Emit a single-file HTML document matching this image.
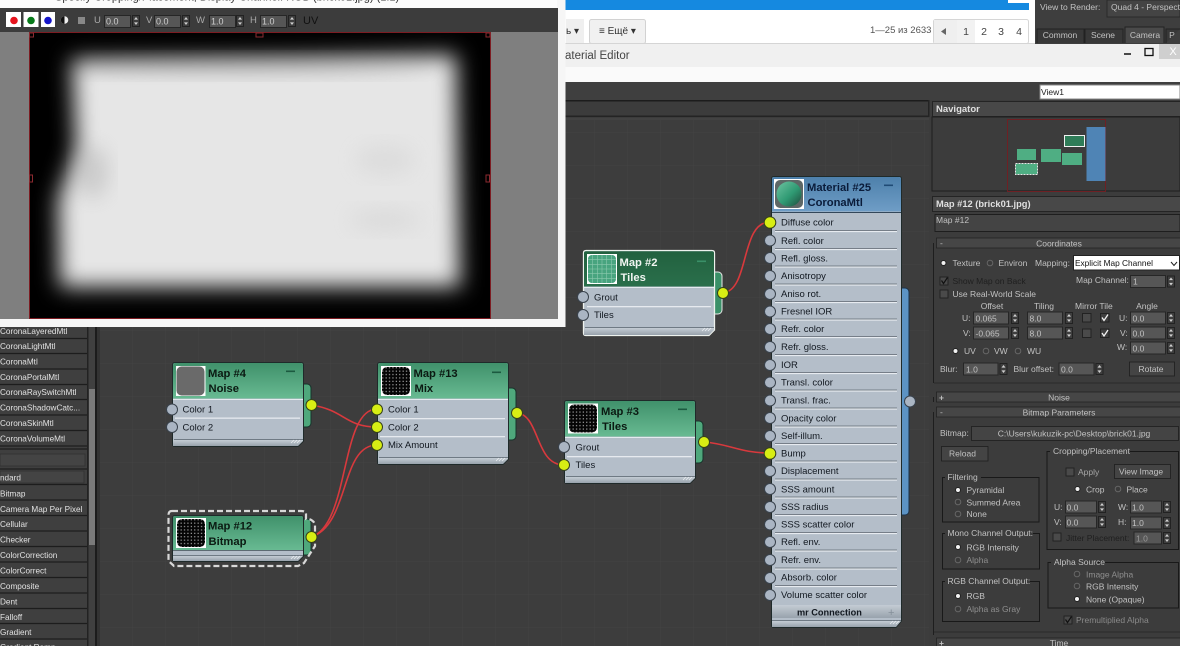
<!DOCTYPE html>
<html><head><meta charset="utf-8"><style>
html,body{margin:0;padding:0;background:#3c3c3c;width:1180px;height:646px;overflow:hidden}
svg{display:block;font-family:"Liberation Sans","Noto Sans CJK SC",sans-serif;filter:blur(.35px)}
text{white-space:pre}
.l{font-size:8.5px;fill:#c2c2c2}
.m{text-anchor:middle}
.dim{fill:#1f1f1f}
.li{font-size:8.2px;fill:#e2e2e2}
.p{font-size:9.5px;fill:#121820}
.t{font-size:11.2px;font-weight:bold;fill:#0b1a12}
.f{fill:#565656;stroke:#262626;stroke-width:1}
.b{fill:#444;stroke:#1f1f1f;stroke-width:.8}
.bar{fill:#464646;stroke:#222;stroke-width:.8}
.grp{fill:none;stroke:#191919;stroke-width:1}
.lb{fill:#3c3c3c;stroke:none}
.w{fill:none;stroke:#d8393d;stroke-width:1.6}
.s{fill:#d8ee14;stroke:#35401a;stroke-width:1}
.o{fill:#aab5c3;stroke:#39424c;stroke-width:1}
.sw{fill:#b4bec9;stroke:#1f2a2a;stroke-width:1}
.h{stroke:#eef1f4;stroke-width:.7;fill:none}
</style></head><body>
<svg width="1180" height="646" viewBox="0 0 1180 646" xmlns="http://www.w3.org/2000/svg">
<defs>
<linearGradient id="gr" x1="0" y1="0" x2="0" y2="1"><stop offset="0" stop-color="#40916b"/><stop offset="1" stop-color="#68ba92"/></linearGradient>
<linearGradient id="dg" x1="0" y1="0" x2="0" y2="1"><stop offset="0" stop-color="#22613f"/><stop offset="1" stop-color="#2a6f4b"/></linearGradient>
<linearGradient id="bl" x1="0" y1="0" x2="0" y2="1"><stop offset="0" stop-color="#4d80ab"/><stop offset="1" stop-color="#6f9dc6"/></linearGradient>
<linearGradient id="bt" x1="0" y1="0" x2="0" y2="1"><stop offset="0" stop-color="#c4ccd4"/><stop offset="1" stop-color="#98a2ac"/></linearGradient>
<linearGradient id="sp" x1="0" y1="0" x2="1" y2="1"><stop offset="0" stop-color="#6fc4a2"/><stop offset=".55" stop-color="#2f9a73"/><stop offset="1" stop-color="#1f4a3c"/></linearGradient>
<filter id="bb" x="-20%" y="-20%" width="140%" height="140%"><feGaussianBlur stdDeviation="11"/></filter>
<filter id="b2" x="-30%" y="-30%" width="160%" height="160%"><feGaussianBlur stdDeviation="10"/></filter>
<pattern id="grid" width="33" height="33" patternUnits="userSpaceOnUse"><path d="M33 0H0V33" fill="none" stroke="#444" stroke-width="1"/></pattern>
<pattern id="dots" width="3.4" height="3.4" patternUnits="userSpaceOnUse"><rect width="3.4" height="3.4" fill="#050505"/><rect x="1.2" y="1.2" width="1.1" height="1.1" fill="#c5c5c5"/></pattern>
<symbol id="spin" width="8" height="12" viewBox="0 0 8 12"><rect x=".5" y=".5" width="7" height="11" fill="#3e3e3e" stroke="#222"/><path d="M4 2L6 4.6H2ZM4 10L6 7.4H2Z" fill="#cfcfcf"/></symbol>
<symbol id="th" width="30" height="30" viewBox="0 0 30 30"><rect width="30" height="30" fill="#fff"/><rect x="1" y="1" width="28" height="28" rx="5" fill="url(#dots)"/></symbol>
</defs>

<!-- base -->
<rect width="1180" height="646" fill="#3c3c3c"/>
<rect x="100" y="120" width="829" height="526" fill="#3d3d3d"/>
<rect x="100" y="120" width="829" height="526" fill="url(#grid)"/>

<!-- top browser strip -->
<rect x="565" y="0" width="470" height="44" fill="#fff"/>
<rect x="565" y="0" width="464" height="10" fill="#1589e0"/>
<rect x="1008" y="0" width="21" height="3" fill="#fff"/>
<rect x="566" y="19" width="18" height="24" fill="#efefef"/>
<text x="566" y="34" font-size="10" fill="#333">ь ▾</text>
<rect x="589.500" y="19.500" width="56" height="24" rx="2" fill="#f1f1f1" stroke="#d2d2d2"/>
<text x="599" y="34" font-size="10" fill="#333">≡ Ещё ▾</text>
<text x="870" y="33" font-size="9.500" fill="#555">1—25 из 2633</text>
<rect x="933.500" y="19.500" width="95" height="24" rx="2" fill="#fff" stroke="#d6d6d6"/>
<rect x="934" y="20" width="23" height="23" fill="#efefef"/>
<path d="M941 31.500L946 28V35Z" fill="#666"/>
<rect x="957" y="20" width="18" height="23" fill="#f2f2f2"/>
<text x="966" y="35" font-size="10.500" fill="#444" text-anchor="middle">1</text>
<text x="984" y="35" font-size="10.500" fill="#444" text-anchor="middle">2</text>
<text x="1001" y="35" font-size="10.500" fill="#444" text-anchor="middle">3</text>
<text x="1019" y="35" font-size="10.500" fill="#444" text-anchor="middle">4</text>

<!-- render setup corner -->
<rect x="1035" y="0" width="145" height="44" fill="#3e3e3e"/>
<text x="1040" y="10" class="l">View to Render:</text>
<rect x="1107" y="0" width="73" height="17" fill="#444" stroke="#2a2a2a"/>
<text x="1111" y="10" class="l">Quad 4 - Perspective</text>
<path d="M1037 43V29H1084V43M1085 43V29H1123V43" fill="#383838" stroke="#222"/>
<path d="M1125 43V27H1164V43" fill="#4a4a4a" stroke="#222"/>
<path d="M1166 43V29H1180" fill="#383838" stroke="#222"/>
<text x="1060" y="38" class="l m">Common</text>
<text x="1103" y="38" class="l m">Scene</text>
<text x="1145" y="38" class="l m">Camera</text>
<text x="1172" y="38" class="l m">P</text>

<!-- material editor title -->
<rect x="565" y="44" width="615" height="23" fill="#f0f0f0"/>
<rect x="565" y="67" width="615" height="15" fill="#fafafa"/>
<rect x="565" y="43" width="470" height="1" fill="#d5d5d5"/>
<text x="565" y="59" font-size="11.500" fill="#444">aterial Editor</text>
<path d="M1124 54H1131" stroke="#111" stroke-width="1.500"/>
<rect x="1145" y="48.500" width="8" height="7" fill="none" stroke="#111" stroke-width="1.300"/>
<rect x="1159" y="44" width="21" height="15" fill="#cfcfcf"/>
<text x="1173" y="55" font-size="11" fill="#fff" text-anchor="middle">X</text>

<!-- toolbar strip -->
<rect x="565" y="82" width="615" height="18" fill="#3f3f3f"/>
<rect x="1040" y="85" width="140" height="14" fill="#fff" stroke="#888"/>
<text x="1041" y="95" font-size="8.500" fill="#222">View1</text>
<rect x="565" y="100" width="364" height="1.500" fill="#1c1c1c"/>
<rect x="565" y="115.500" width="364" height="1.500" fill="#242424"/>
<rect x="928" y="100" width="1.500" height="17" fill="#242424"/>
<rect x="100" y="118.500" width="829" height="1" fill="#555" opacity=".5"/>

<!-- left list -->
<rect x="0" y="327" width="100" height="319" fill="#333"/>
<rect x="0" y="327" width="87" height="319" fill="#3f3f3f"/>
<rect x="88" y="327" width="7" height="319" fill="#404040"/>
<rect x="89" y="389" width="6" height="156" fill="#7a7a7a"/>
<rect x="95" y="327" width="2" height="319" fill="#1c1c1c"/>
<rect x="87" y="327" width="1.500" height="319" fill="#222"/>
<g stroke="#1d1d1d" stroke-width="1.200">
<path d="M0 338.500H87M0 353.500H87M0 369H87M0 384.500H87M0 399.500H87M0 415H87M0 430.500H87M0 446H87M0 449H87M0 469H87M0 484.500H87M0 500H87M0 515.500H87M0 531H87M0 546.500H87M0 562H87M0 577.500H87M0 593H87M0 608.500H87M0 623.500H87M0 639H87"/>
</g>
<rect x="0" y="454" width="85" height="12" fill="#444" stroke="#333"/>
<rect x="0" y="471" width="84" height="12" fill="#444" stroke="#333"/>
<text x="0" y="334" class="li">CoronaLayeredMtl</text>
<text x="0" y="349" class="li">CoronaLightMtl</text>
<text x="0" y="364.500" class="li">CoronaMtl</text>
<text x="0" y="380" class="li">CoronaPortalMtl</text>
<text x="0" y="395" class="li">CoronaRaySwitchMtl</text>
<text x="0" y="410.500" class="li">CoronaShadowCatc...</text>
<text x="0" y="426" class="li">CoronaSkinMtl</text>
<text x="0" y="441.500" class="li">CoronaVolumeMtl</text>
<text x="0" y="480.500" class="li">ndard</text>
<text x="0" y="496.500" class="li">Bitmap</text>
<text x="0" y="512" class="li">Camera Map Per Pixel</text>
<text x="0" y="527" class="li">Cellular</text>
<text x="0" y="542.500" class="li">Checker</text>
<text x="0" y="558" class="li">ColorCorrection</text>
<text x="0" y="573.500" class="li">ColorCorrect</text>
<text x="0" y="589" class="li">Composite</text>
<text x="0" y="604.500" class="li">Dent</text>
<text x="0" y="620" class="li">Falloff</text>
<text x="0" y="635" class="li">Gradient</text>
<text x="0" y="650" class="li">Gradient Ramp</text>

<!-- Node: Map #4 -->
<rect x="296" y="384" width="15" height="43" rx="4" fill="#4fa87c" stroke="#16332a"/>
<path d="M175 362.500H301Q303.500 362.500 303.500 365V441L298 446.500H175Q172.500 446.500 172.500 444V365Q172.500 362.500 175 362.500Z" class="sw"/>
<path d="M175 363H301Q303 363 303 365V398.500H173V365Q173 363 175 363Z" fill="url(#gr)"/>
<rect x="173" y="399" width="130" height="1" fill="#e5eaef"/>
<rect x="175" y="417.500" width="125" height="1.300" fill="#e6eaef"/>
<rect x="174" y="439" width="129" height="1" fill="#6f7a84"/>
<path d="M173 440H303V441L298 446H173Z" fill="url(#bt)"/>
<path class="h" d="M291 443L294 440M294 443L297 440M297 443L300 440"/>
<rect x="176" y="366" width="29.500" height="30" fill="#fff"/><rect x="176.500" y="366.500" width="28" height="29" rx="5" fill="#6a6a6a"/>
<text x="208" y="377" class="t">Map #4</text>
<text x="208.500" y="392" class="t">Noise</text>
<rect x="286" y="370.500" width="9" height="1.600" fill="#1c5a40"/>
<text x="182.500" y="412.500" class="p">Color 1</text>
<text x="182.500" y="430.500" class="p">Color 2</text>

<!-- Node: Map #12 -->
<rect x="296" y="519" width="15" height="36" rx="4" fill="#4fa87c" stroke="#16332a"/>
<path d="M175 515.500H301Q303.500 515.500 303.500 518V556L298 561.500H175Q172.500 561.500 172.500 559V518Q172.500 515.500 175 515.500Z" class="sw"/>
<path d="M175 516H301Q303 516 303 518V550H173V518Q173 516 175 516Z" fill="url(#gr)"/>
<rect x="173" y="550" width="130" height="1" fill="#5d6a72"/>
<rect x="173" y="555" width="130" height="1" fill="#6f7a84"/>
<path d="M173 556H303V556L298 561H173Z" fill="url(#bt)"/>
<path class="h" d="M291 559L294 556M294 559L297 556M297 559L300 556"/>
<use href="#th" x="176" y="518"/>
<text x="208" y="529.500" class="t">Map #12</text>
<text x="208.500" y="545" class="t">Bitmap</text>
<path d="M172 511H301Q306 511 306 514V519H309Q315 521 315 526V546L304 563L298 566H174L168.500 561V515Q168.500 511 172 511Z" fill="none" stroke="#d8d8d8" stroke-width="2.200" stroke-dasharray="6 3"/>

<!-- Node: Map #13 -->
<rect x="501" y="388" width="15" height="52" rx="4" fill="#4fa87c" stroke="#16332a"/>
<path d="M380 362.500H506Q508.500 362.500 508.500 365V459L503 464.500H380Q377.500 464.500 377.500 462V365Q377.500 362.500 380 362.500Z" class="sw"/>
<path d="M380 363H506Q508 363 508 365V398.500H378V365Q378 363 380 363Z" fill="url(#gr)"/>
<rect x="378" y="399" width="130" height="1" fill="#e5eaef"/>
<rect x="380" y="418" width="125" height="1.300" fill="#e6eaef"/>
<rect x="380" y="436" width="125" height="1.300" fill="#e6eaef"/>
<rect x="379" y="457" width="129" height="1" fill="#6f7a84"/>
<path d="M378 458H508V459L503 464H378Z" fill="url(#bt)"/>
<path class="h" d="M496 461L499 458M499 461L502 458M502 461L505 458"/>
<use href="#th" x="381" y="366"/>
<text x="413.500" y="377" class="t">Map #13</text>
<text x="414.500" y="392" class="t">Mix</text>
<rect x="492" y="371.500" width="9" height="1.600" fill="#1c5a40"/>
<text x="388" y="412.500" class="p">Color 1</text>
<text x="388" y="430.500" class="p">Color 2</text>
<text x="388" y="448" class="p">Mix Amount</text>

<!-- Node: Map #3 -->
<rect x="688" y="421" width="15" height="42" rx="4" fill="#4fa87c" stroke="#16332a"/>
<path d="M567 400.500H693Q695.500 400.500 695.500 403V478L690 483.500H567Q564.500 483.500 564.500 481V403Q564.500 400.500 567 400.500Z" class="sw"/>
<path d="M567 401H693Q695 401 695 403V436.500H565V403Q565 401 567 401Z" fill="url(#gr)"/>
<rect x="565" y="437" width="130" height="1" fill="#e5eaef"/>
<rect x="567" y="456" width="125" height="1.300" fill="#e6eaef"/>
<rect x="566" y="476" width="129" height="1" fill="#6f7a84"/>
<path d="M565 477H695V478L690 483H565Z" fill="url(#bt)"/>
<path class="h" d="M683 480L686 477M686 480L689 477M689 480L692 477"/>
<use href="#th" x="568" y="403.500"/>
<text x="601" y="415" class="t">Map #3</text>
<text x="602" y="430" class="t">Tiles</text>
<rect x="678" y="408.500" width="9" height="1.600" fill="#1c5a40"/>
<text x="575.500" y="450.500" class="p">Grout</text>
<text x="575.500" y="468" class="p">Tiles</text>

<!-- Node: Map #2 -->
<rect x="707" y="272" width="15" height="42" rx="4" fill="#3a9068" stroke="#e8e8e8"/>
<path d="M586 250.500H712Q714.500 250.500 714.500 253V330L709 335.500H586Q583.500 335.500 583.500 333V253Q583.500 250.500 586 250.500Z" fill="#b4bec9" stroke="#eef2ee" stroke-width="1.300"/>
<path d="M586 251.200H712Q714 251.200 714 253V286.500H584V253Q584 251.200 586 251.200Z" fill="url(#dg)"/>
<rect x="584" y="287" width="130" height="1" fill="#e5eaef"/>
<rect x="587" y="306" width="124" height="1.300" fill="#e6eaef"/>
<rect x="585" y="327" width="129" height="1" fill="#6f7a84"/>
<path d="M584 328H714V330L709 335H584Z" fill="url(#bt)"/>
<path class="h" d="M702 331L705 328M705 331L708 328M708 331L711 328"/>
<rect x="587" y="254" width="30" height="30" fill="#fff"/><rect x="588" y="255" width="28" height="28" rx="4" fill="#48a47f"/>
<path d="M588 259.700H616M588 264.400H616M588 269H616M588 273.700H616M588 278.400H616M592.700 255V283M597.400 255V283M602 255V283M606.700 255V283M611.400 255V283" stroke="#8cc9ae" stroke-width=".6"/>
<text x="619.500" y="266" class="t" style="fill:#f1f5f1">Map #2</text>
<text x="620.500" y="281" class="t" style="fill:#f1f5f1">Tiles</text>
<rect x="697" y="260.500" width="9" height="1.600" fill="#3a9068"/>
<text x="594" y="300.500" class="p">Grout</text>
<text x="594" y="318" class="p">Tiles</text>

<!-- Node: Material -->
<rect x="894" y="288" width="15" height="227" rx="4" fill="#5c93c4" stroke="#1c3146"/>
<path d="M774 176.500H899Q901.500 176.500 901.500 179V621L896 627.500H774Q771.500 627.500 771.500 625V179Q771.500 176.500 774 176.500Z" class="sw"/>
<path d="M774 177H899Q901 177 901 179V211.500H772V179Q772 177 774 177Z" fill="url(#bl)"/>
<rect x="772" y="212" width="129" height="1" fill="#33475a"/>
<g stroke="#e7ebf0" stroke-width="1.300"><path d="M775 231.500H897M775 249.500H897M775 267H897M775 285H897M775 302.500H897M775 320H897M775 337.500H897M775 355.500H897M775 373.500H897M775 391H897M775 409H897M775 427H897M775 444.500H897M775 462H897M775 480H897M775 498H897M775 515.500H897M775 533.500H897M775 551H897M775 569H897M775 586.500H897"/></g>
<g stroke="#5f6872" stroke-width=".7"><path d="M775 230.500H897M775 248.500H897M775 266H897M775 284H897M775 301.500H897M775 319H897M775 336.500H897M775 354.500H897M775 372.500H897M775 390H897M775 408H897M775 426H897M775 443.500H897M775 461H897M775 479H897M775 497H897M775 514.500H897M775 532.500H897M775 550H897M775 568H897M775 585.500H897"/></g>
<rect x="772" y="605" width="129" height="13" fill="url(#bt)"/>
<rect x="772" y="620" width="129" height="1" fill="#6f7a84"/>
<path d="M772 621H901V621L896 627H772Z" fill="url(#bt)"/>
<path class="h" d="M890 624L893 621M893 624L896 621M896 624L899 621"/>
<rect x="774" y="179" width="30" height="30" fill="#fff"/><rect x="775" y="180" width="28" height="28" rx="5" fill="#5d6766"/>
<circle cx="789" cy="194" r="12.500" fill="url(#sp)"/>
<text x="807" y="191" class="t" style="fill:#0a1c3a">Material #25</text>
<text x="807.500" y="206" class="t" style="fill:#0a1c3a">CoronaMtl</text>
<rect x="884" y="184.500" width="9" height="1.600" fill="#1f4b75"/>
<text x="781" y="225.500" class="p">Diffuse color</text>
<text x="781" y="244" class="p">Refl. color</text>
<text x="781" y="261.500" class="p">Refl. gloss.</text>
<text x="781" y="279" class="p">Anisotropy</text>
<text x="781" y="297" class="p">Aniso rot.</text>
<text x="781" y="314.500" class="p">Fresnel IOR</text>
<text x="781" y="332" class="p">Refr. color</text>
<text x="781" y="350" class="p">Refr. gloss.</text>
<text x="781" y="368" class="p">IOR</text>
<text x="781" y="385.500" class="p">Transl. color</text>
<text x="781" y="403.500" class="p">Transl. frac.</text>
<text x="781" y="421.500" class="p">Opacity color</text>
<text x="781" y="439" class="p">Self-illum.</text>
<text x="781" y="456.500" class="p">Bump</text>
<text x="781" y="474" class="p">Displacement</text>
<text x="781" y="492.500" class="p">SSS amount</text>
<text x="781" y="510" class="p">SSS radius</text>
<text x="781" y="527.500" class="p">SSS scatter color</text>
<text x="781" y="545" class="p">Refl. env.</text>
<text x="781" y="563" class="p">Refr. env.</text>
<text x="781" y="580.500" class="p">Absorb. color</text>
<text x="781" y="598" class="p">Volume scatter color</text>
<text x="797" y="615.500" class="p" style="font-weight:bold;font-size:9.200px">mr Connection</text>
<text x="888" y="616" font-size="11" fill="#85909a">+</text>

<!-- wires -->
<path class="w" d="M311 405C345 410 345 427 377 427"/>
<path class="w" d="M311 537C350 525 340 409 377 409"/>
<path class="w" d="M311 537C350 525 340 445 377 445"/>
<path class="w" d="M517 413C540 415 535 465 564 465"/>
<path class="w" d="M704 442C730 444 740 453 770 453"/>
<path class="w" d="M723 293C750 290 740 222 770 222"/>

<!-- ports -->
<circle class="s" cx="311.500" cy="405" r="5.500"/>
<circle class="s" cx="311.500" cy="537" r="5.500"/>
<circle class="s" cx="517" cy="413" r="5.500"/>
<circle class="s" cx="704" cy="442" r="5.500"/>
<circle class="s" cx="723" cy="293" r="5.500"/>
<circle class="o" cx="910" cy="401.500" r="5.500"/>
<circle class="o" cx="172" cy="409.500" r="5.500"/>
<circle class="o" cx="172" cy="427" r="5.500"/>
<circle class="s" cx="377" cy="409.500" r="5.500"/>
<circle class="s" cx="377" cy="427" r="5.500"/>
<circle class="s" cx="377" cy="445" r="5.500"/>
<circle class="o" cx="564" cy="447" r="5.500"/>
<circle class="s" cx="564" cy="465" r="5.500"/>
<circle class="o" cx="583" cy="297" r="5.500"/>
<circle class="o" cx="583" cy="315" r="5.500"/>
<circle class="s" cx="770" cy="222.500" r="5.800"/>
<circle class="o" cx="770" cy="240.500" r="5.500"/>
<circle class="o" cx="770" cy="258" r="5.500"/>
<circle class="o" cx="770" cy="276" r="5.500"/>
<circle class="o" cx="770" cy="294" r="5.500"/>
<circle class="o" cx="770" cy="311.500" r="5.500"/>
<circle class="o" cx="770" cy="329" r="5.500"/>
<circle class="o" cx="770" cy="347" r="5.500"/>
<circle class="o" cx="770" cy="365" r="5.500"/>
<circle class="o" cx="770" cy="382.500" r="5.500"/>
<circle class="o" cx="770" cy="400.500" r="5.500"/>
<circle class="o" cx="770" cy="418" r="5.500"/>
<circle class="o" cx="770" cy="436" r="5.500"/>
<circle class="s" cx="770" cy="453.500" r="5.800"/>
<circle class="o" cx="770" cy="471" r="5.500"/>
<circle class="o" cx="770" cy="489" r="5.500"/>
<circle class="o" cx="770" cy="507" r="5.500"/>
<circle class="o" cx="770" cy="524.500" r="5.500"/>
<circle class="o" cx="770" cy="542" r="5.500"/>
<circle class="o" cx="770" cy="560" r="5.500"/>
<circle class="o" cx="770" cy="578" r="5.500"/>
<circle class="o" cx="770" cy="595" r="5.500"/>

<!-- Preview window -->
<rect x="0" y="0" width="565.500" height="327" fill="#f6f6f6"/>
<rect x="0" y="0" width="557" height="8" fill="#fbfbfb"/>
<text x="55" y="0.500" font-size="11" fill="#333">Specify Cropping/Placement, Display Channel: RGB (brick01.jpg) (1:1)</text>
<rect x="0" y="8" width="558" height="24" fill="#3c3c3c"/>
<rect x="0" y="32" width="558" height="287" fill="#7f7f7f"/>
<rect x="29" y="32" width="462" height="287" fill="#000"/>
<path d="M72 60L300 58L456 55L460 287L60 287L58 200L76 150Z" fill="#e6e6e6" filter="url(#bb)"/>
<ellipse cx="92" cy="172" rx="16" ry="26" fill="#a8a8a8" filter="url(#b2)" opacity=".45"/>
<ellipse cx="385" cy="160" rx="30" ry="16" fill="#cfcfcf" filter="url(#b2)" opacity=".4"/>
<ellipse cx="385" cy="220" rx="36" ry="12" fill="#cccccc" filter="url(#b2)" opacity=".4"/>
<ellipse cx="250" cy="66" rx="180" ry="10" fill="#9c9c9c" filter="url(#b2)" opacity=".3"/>
<rect x="0" y="319" width="558" height="8" fill="#f6f6f6"/>
<rect x="491" y="32" width="67" height="287" fill="#7f7f7f"/>
<rect x="0" y="32" width="29" height="287" fill="#7f7f7f"/>
<rect x="29.500" y="32.500" width="461" height="286" fill="none" stroke="#7d1c22" stroke-width="1"/>
<g fill="none" stroke="#8c2a30" stroke-width="1">
<rect x="29.500" y="33" width="4" height="4"/><rect x="486" y="33" width="4" height="4"/>
<rect x="256" y="33" width="7" height="4"/>
<rect x="29.500" y="175" width="3" height="7"/><rect x="486" y="175" width="3.500" height="7"/>
</g>
<!-- preview toolbar -->
<rect x="6" y="12" width="15" height="15" fill="#fff"/><circle cx="14" cy="20.500" r="3.800" fill="#e6141e"/>
<rect x="23.500" y="12" width="15" height="15" fill="#fff"/><circle cx="31" cy="20.500" r="3.800" fill="#087a1a"/>
<rect x="41" y="12" width="14" height="15" fill="#fff"/><circle cx="48" cy="20.500" r="3.800" fill="#1515c8"/>
<circle cx="64.500" cy="20" r="3.800" fill="#eee"/><path d="M64.500 16.200A3.800 3.800 0 0 0 64.500 23.800Z" fill="#111"/>
<rect x="78" y="17" width="7" height="7" fill="#888"/>
<text x="94" y="23" font-size="9.500" fill="#a8a8a8">U</text>
<rect x="104.500" y="15.500" width="26" height="12" class="f"/>
<text x="106" y="24.500" font-size="9" fill="#cfcfcf">0.0</text>
<use href="#spin" x="132" y="15"/>
<text x="146" y="23" font-size="9.500" fill="#a8a8a8">V</text>
<rect x="154.500" y="15.500" width="26" height="12" class="f"/>
<text x="156" y="24.500" font-size="9" fill="#cfcfcf">0.0</text>
<use href="#spin" x="182" y="15"/>
<text x="196" y="23" font-size="9.500" fill="#a8a8a8">W</text>
<rect x="209.500" y="15.500" width="26" height="12" class="f"/>
<text x="211" y="24.500" font-size="9" fill="#cfcfcf">1.0</text>
<use href="#spin" x="236" y="15"/>
<text x="250" y="23" font-size="9.500" fill="#a8a8a8">H</text>
<rect x="260.500" y="15.500" width="26" height="12" class="f"/>
<text x="262" y="24.500" font-size="9" fill="#cfcfcf">1.0</text>
<use href="#spin" x="288" y="15"/>
<text x="303" y="24" font-size="11" fill="#111">UV</text>

<!-- Navigator -->
<rect x="930" y="100" width="250" height="546" fill="#3c3c3c"/>
<rect x="932.500" y="101.500" width="248" height="15" fill="#484848" stroke="#242424"/>
<text x="936" y="112" font-size="9.500" font-weight="bold" fill="#e0e0e0">Navigator</text>
<rect x="932" y="117" width="248" height="74" fill="#3c3c3c" stroke="#1e1e1e"/>
<rect x="1007.500" y="119.500" width="98" height="72" fill="none" stroke="#6e2024"/>
<rect x="1086.500" y="127" width="19" height="54" fill="#4f84b5"/>
<rect x="1017" y="149" width="19" height="11" fill="#4fae83"/>
<rect x="1041" y="149" width="20" height="13" fill="#4fae83"/>
<rect x="1062" y="153" width="20" height="12" fill="#4fae83"/>
<rect x="1064.500" y="135.500" width="20" height="11" fill="#2f7c58" stroke="#f0f0f0"/>
<rect x="1015.500" y="163.500" width="22" height="11" fill="#4fae83" stroke="#e8e8e8" stroke-dasharray="2 1"/>

<!-- Map #12 panel -->
<rect x="932.500" y="196.500" width="248" height="15" fill="#484848" stroke="#242424"/>
<text x="936" y="207" font-size="9.300" font-weight="bold" fill="#e0e0e0">Map #12 (brick01.jpg)</text>
<rect x="935" y="214.500" width="245" height="17" fill="#444" stroke="#1e1e1e"/>
<text x="936" y="223" class="l">Map #12</text>
<path d="M933.500 243V383M933.500 397V402M933.500 412V635" stroke="#1e1e1e" fill="none"/>
<path d="M934 383H1180M934 632H1180" stroke="#2a2a2a"/>
<rect x="936.500" y="238" width="244" height="10" class="bar"/>
<text x="940" y="246" class="l">-</text><text x="1059" y="246.500" class="l" text-anchor="middle">Coordinates</text>

<circle cx="943.500" cy="263" r="2.500" fill="#f2f2f2" stroke="#222"/>
<text x="952.500" y="266" class="l">Texture</text>
<circle cx="990" cy="263" r="2.800" fill="#3a3a3a" stroke="#666"/>
<text x="998.500" y="266" class="l">Environ</text>
<text x="1035" y="266" class="l">Mapping:</text>
<rect x="1073.500" y="255.500" width="106" height="14.500" fill="#fff" stroke="#222"/>
<text x="1075" y="266" font-size="8.300" fill="#111">Explicit Map Channel</text>
<path d="M1171 262L1174 265.500L1177 262" fill="none" stroke="#222"/>

<rect x="940" y="277" width="8" height="8" fill="#4a4a4a" stroke="#222"/><path d="M941.500 280.500L943.500 283.500L947.500 277.500" fill="none" stroke="#111" stroke-width="1.200"/>
<text x="952.500" y="284" class="l" style="fill:#1f1f1f">Show Map on Back</text>
<text x="1076" y="283" class="l">Map Channel:</text>
<rect x="1130.500" y="275.500" width="35" height="12" class="f"/>
<text x="1133" y="284.500" class="l">1</text>
<use href="#spin" x="1167" y="275.500"/>
<rect x="940" y="290" width="8" height="8" fill="#4a4a4a" stroke="#222"/>
<text x="952.500" y="297" class="l">Use Real-World Scale</text>

<text x="992" y="309" class="l" text-anchor="middle">Offset</text>
<text x="1044" y="309" class="l" text-anchor="middle">Tiling</text>
<text x="1075" y="309" class="l">Mirror Tile</text>
<text x="1147" y="309" class="l" text-anchor="middle">Angle</text>

<text x="962" y="321" class="l">U:</text>
<rect x="973.500" y="312" width="35" height="12" class="f"/><text x="975.500" y="321.500" class="l">0.065</text><use href="#spin" x="1011" y="312"/>
<rect x="1027.500" y="312" width="35" height="12" class="f"/><text x="1029.500" y="321.500" class="l">8.0</text><use href="#spin" x="1065" y="312"/>
<rect x="1082.500" y="313.500" width="8.500" height="8.500" fill="#4a4a4a" stroke="#222"/>
<rect x="1100.500" y="313.500" width="8.500" height="8.500" fill="#3f3f3f" stroke="#222"/><path d="M1102 317.500L1104 320.500L1108 314.500" fill="none" stroke="#f2f2f2" stroke-width="1.300"/>
<text x="1119" y="321" class="l">U:</text>
<rect x="1130.500" y="312" width="35" height="12" class="f"/><text x="1132.500" y="321.500" class="l">0.0</text><use href="#spin" x="1167" y="312"/>

<text x="963" y="336" class="l">V:</text>
<rect x="973.500" y="327" width="35" height="12" class="f"/><text x="975.500" y="336.500" class="l">-0.065</text><use href="#spin" x="1011" y="327"/>
<rect x="1027.500" y="327" width="35" height="12" class="f"/><text x="1029.500" y="336.500" class="l">8.0</text><use href="#spin" x="1065" y="327"/>
<rect x="1082.500" y="329" width="8.500" height="8.500" fill="#4a4a4a" stroke="#222"/>
<rect x="1100.500" y="329" width="8.500" height="8.500" fill="#3f3f3f" stroke="#222"/><path d="M1102 333L1104 336L1108 330" fill="none" stroke="#f2f2f2" stroke-width="1.300"/>
<text x="1120" y="336" class="l">V:</text>
<rect x="1130.500" y="327" width="35" height="12" class="f"/><text x="1132.500" y="336.500" class="l">0.0</text><use href="#spin" x="1167" y="327"/>
<text x="1117" y="350" class="l">W:</text>
<rect x="1130.500" y="342" width="35" height="12" class="f"/><text x="1132.500" y="351.500" class="l">0.0</text><use href="#spin" x="1167" y="342"/>

<circle cx="955.500" cy="351" r="2.500" fill="#f2f2f2" stroke="#222"/><text x="964" y="354" class="l">UV</text>
<circle cx="986" cy="351" r="2.800" fill="#3a3a3a" stroke="#666"/><text x="994" y="354" class="l">VW</text>
<circle cx="1018" cy="351" r="2.800" fill="#3a3a3a" stroke="#666"/><text x="1027" y="354" class="l">WU</text>

<text x="940" y="372" class="l">Blur:</text>
<rect x="963.500" y="363" width="34.500" height="12" class="f"/><text x="966" y="372.500" class="l">1.0</text><use href="#spin" x="999.500" y="363"/>
<text x="1013.500" y="372" class="l">Blur offset:</text>
<rect x="1059" y="363" width="35" height="12" class="f"/><text x="1061" y="372.500" class="l">0.0</text><use href="#spin" x="1095.500" y="363"/>
<rect x="1129.500" y="362" width="45" height="14" class="b"/><text x="1151" y="372" class="l" text-anchor="middle">Rotate</text>

<rect x="936.500" y="392" width="244" height="10" class="bar"/>
<text x="939" y="400.500" class="l" style="font-weight:bold">+</text><text x="1059" y="400.500" class="l" text-anchor="middle">Noise</text>
<rect x="936.500" y="407" width="244" height="10" class="bar"/>
<text x="940" y="415" class="l">-</text><text x="1059" y="415.500" class="l" text-anchor="middle">Bitmap Parameters</text>

<text x="940" y="436" class="l">Bitmap:</text>
<rect x="971.500" y="426.500" width="207" height="14" class="b"/>
<text x="1074" y="436.500" class="l" text-anchor="middle">C:\Users\kukuzik-pc\Desktop\brick01.jpg</text>
<rect x="941.500" y="446.500" width="46.500" height="14.500" class="b"/><text x="962.500" y="456.500" class="l" text-anchor="middle">Reload</text>

<!-- groups -->
<rect x="942.500" y="477.500" width="96.500" height="44.500" class="grp"/>
<rect x="945" y="473" width="36" height="9" class="lb"/><text x="947.500" y="480" class="l">Filtering</text>
<circle cx="958" cy="490" r="2.500" fill="#f2f2f2" stroke="#222"/><text x="966.500" y="493" class="l">Pyramidal</text>
<circle cx="958" cy="502" r="2.800" fill="#3a3a3a" stroke="#666"/><text x="966.500" y="505.500" class="l">Summed Area</text>
<circle cx="958" cy="514" r="2.800" fill="#3a3a3a" stroke="#666"/><text x="966.500" y="517" class="l">None</text>

<rect x="942.500" y="533.500" width="97" height="35.500" class="grp"/>
<rect x="945" y="529" width="88" height="9" class="lb"/><text x="947.500" y="536" class="l">Mono Channel Output:</text>
<circle cx="958" cy="547" r="2.500" fill="#f2f2f2" stroke="#222"/><text x="966.500" y="550.500" class="l">RGB Intensity</text>
<circle cx="958" cy="560" r="2.800" fill="#3a3a3a" stroke="#666"/><text x="966.500" y="563" class="l" style="fill:#8f8f8f">Alpha</text>

<rect x="942.500" y="581.500" width="97" height="40" class="grp"/>
<rect x="945" y="577" width="85" height="9" class="lb"/><text x="947.500" y="584" class="l">RGB Channel Output:</text>
<circle cx="958" cy="596" r="2.500" fill="#f2f2f2" stroke="#222"/><text x="966.500" y="599" class="l">RGB</text>
<circle cx="958" cy="609" r="2.800" fill="#3a3a3a" stroke="#666"/><text x="966.500" y="612" class="l" style="fill:#8f8f8f">Alpha as Gray</text>

<rect x="1047" y="451.500" width="131.500" height="98" class="grp"/>
<rect x="1050" y="447" width="80" height="9" class="lb"/><text x="1053" y="454" class="l">Cropping/Placement</text>
<rect x="1066" y="468" width="8" height="8" fill="#4a4a4a" stroke="#222"/><text x="1078" y="475" class="l" style="fill:#a6a6a6">Apply</text>
<rect x="1114.500" y="464.500" width="56" height="14" class="b"/><text x="1141" y="474.500" class="l" text-anchor="middle">View Image</text>
<circle cx="1077.500" cy="489" r="2.500" fill="#f2f2f2" stroke="#222"/><text x="1086" y="492.500" class="l">Crop</text>
<circle cx="1118" cy="489" r="2.800" fill="#3a3a3a" stroke="#666"/><text x="1126.500" y="492.500" class="l">Place</text>
<text x="1054" y="510" class="l">U:</text><rect x="1065.500" y="501" width="31" height="12" class="f"/><text x="1066.500" y="510.500" class="l">0.0</text><use href="#spin" x="1098" y="501"/>
<text x="1118" y="510" class="l">W:</text><rect x="1130.500" y="501" width="31" height="12" class="f"/><text x="1132" y="510.500" class="l">1.0</text><use href="#spin" x="1163" y="501"/>
<text x="1054" y="525" class="l">V:</text><rect x="1065.500" y="516" width="31" height="12" class="f"/><text x="1066.500" y="525.500" class="l">0.0</text><use href="#spin" x="1098" y="516"/>
<text x="1118" y="525" class="l">H:</text><rect x="1130.500" y="517" width="31" height="12" class="f"/><text x="1132" y="526" class="l">1.0</text><use href="#spin" x="1163" y="517"/>
<rect x="1053" y="533" width="8" height="8" fill="#4a4a4a" stroke="#222"/><text x="1066" y="541" class="l" style="fill:#1f1f1f">Jitter Placement:</text>
<rect x="1134" y="532" width="27.500" height="12" class="f"/><text x="1136" y="541.500" class="l" style="fill:#999">1.0</text><use href="#spin" x="1163" y="532"/>

<rect x="1048" y="562.500" width="130.500" height="45.500" class="grp"/>
<rect x="1051" y="558" width="46" height="9" class="lb"/><text x="1054" y="565" class="l">Alpha Source</text>
<circle cx="1077" cy="574" r="2.800" fill="#3a3a3a" stroke="#666"/><text x="1086" y="577.500" class="l" style="fill:#8f8f8f">Image Alpha</text>
<circle cx="1077" cy="586" r="2.800" fill="#3a3a3a" stroke="#666"/><text x="1086" y="589.500" class="l">RGB Intensity</text>
<circle cx="1077" cy="599" r="2.500" fill="#f2f2f2" stroke="#222"/><text x="1086" y="602.500" class="l">None (Opaque)</text>

<rect x="1064" y="616" width="8" height="8" fill="#4a4a4a" stroke="#222"/><path d="M1065.500 619.500L1067.500 622.500L1071.500 616.500" fill="none" stroke="#111" stroke-width="1.200"/>
<text x="1076" y="623" class="l" style="fill:#8a8a8a">Premultiplied Alpha</text>

<rect x="936.500" y="638" width="244" height="10" class="bar"/>
<text x="939" y="646" class="l" style="font-weight:bold">+</text><text x="1059" y="646" class="l" text-anchor="middle">Time</text>
</svg>
</body></html>
